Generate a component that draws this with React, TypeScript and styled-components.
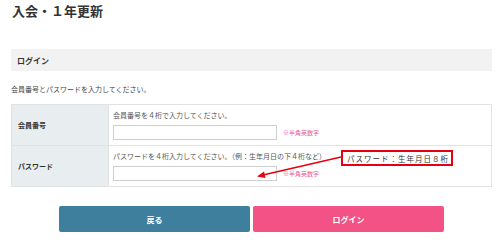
import React, { FC } from 'react';
import styled, { createGlobalStyle } from 'styled-components';

const GlobalStyle = createGlobalStyle`
  body {
    margin: 0;
    background: #fff;
    font-family: "Noto Sans CJK JP", "Noto Sans", sans-serif;
    color: #333;
  }
`;

const Page = styled.div`
  width: 481px;
  padding: 2px 0 0 11px;
`;

const Title = styled.h1`
  margin: 0 0 0 1px;
  font-size: 13px;
  line-height: 18px;
  font-weight: 700;
  color: #333;
`;

const SectionBar = styled.div`
  margin-top: 29px;
  height: 22px;
  display: flex;
  align-items: center;
  padding-left: 6px;
  background: #f2f2f2;
  font-size: 8px;
  font-weight: 700;
`;

const Intro = styled.p`
  margin: 13px 0 0;
  font-size: 7px;
  line-height: 10px;
  color: #444;
`;

const TableWrap = styled.div`
  position: relative;
  margin-top: 10px;
`;

const Table = styled.div`
  display: grid;
  grid-template-columns: 96px 1fr;
  border: 1px solid #e2e2e2;
`;

const Label = styled.div<{ $last?: boolean }>`
  display: flex;
  align-items: center;
  padding-left: 6px;
  background: #e8edef;
  font-size: 7px;
  font-weight: 700;
  border-bottom: ${(p) => (p.$last ? 'none' : '1px solid #e2e2e2')};
`;

const Cell = styled.div<{ $last?: boolean }>`
  padding: 5px 6px 5px 4px;
  border-left: 1px solid #e2e2e2;
  border-bottom: ${(p) => (p.$last ? 'none' : '1px solid #e2e2e2')};
`;

const Hint = styled.div`
  font-size: 7px;
  line-height: 10px;
  color: #555;
`;

const InputRow = styled.div`
  display: flex;
  align-items: center;
  gap: 6px;
  margin-top: 5px;
`;

const Input = styled.input`
  box-sizing: border-box;
  width: 164px;
  height: 15px;
  margin: 0;
  padding: 0 3px;
  border: 1px solid #cfcfcf;
  background: #fff;
`;

const Note = styled.span`
  font-size: 6px;
  color: #ea5b8d;
`;

const Callout = styled.div`
  position: absolute;
  left: 330px;
  top: 46px;
  box-sizing: border-box;
  width: 112px;
  height: 16px;
  border: 2px solid #e60012;
  background: #fff;
  display: flex;
  align-items: center;
  padding-left: 4px;
  font-size: 7.5px;
  letter-spacing: 1px;
  color: #333;
  white-space: nowrap;
`;

const Arrow = styled.svg`
  position: absolute;
  left: 240px;
  top: 48px;
  overflow: visible;
`;

const Buttons = styled.div`
  display: flex;
  justify-content: center;
  gap: 3px;
  margin-top: 19px;
`;

const Button = styled.button<{ $variant: 'back' | 'login' }>`
  width: 191px;
  height: 26px;
  border: none;
  border-radius: 2px;
  background: ${(p) => (p.$variant === 'back' ? '#3e7f9e' : '#f25286')};
  color: #fff;
  font-family: inherit;
  font-size: 8px;
  font-weight: 700;
  padding: 0;
`;

const App: FC = () => (
  <Page>
    <GlobalStyle />
    <Title>入会・１年更新</Title>
    <SectionBar>ログイン</SectionBar>
    <Intro>会員番号とパスワードを入力してください。</Intro>
    <TableWrap>
      <Table>
        <Label>会員番号</Label>
        <Cell>
          <Hint>会員番号を４桁で入力してください。</Hint>
          <InputRow>
            <Input type="text" />
            <Note>※半角英数字</Note>
          </InputRow>
        </Cell>
        <Label $last>パスワード</Label>
        <Cell $last>
          <Hint>パスワードを４桁入力してください。（例：生年月日の下４桁など）</Hint>
          <InputRow>
            <Input type="password" />
            <Note>※半角英数字</Note>
          </InputRow>
        </Cell>
      </Table>
      <Arrow width="92" height="30" viewBox="0 0 92 30">
        <line x1="90" y1="5" x2="12" y2="23" stroke="#e60012" strokeWidth="1.5" />
        <polygon points="6,24.5 13,19.5 14.5,26" fill="#e60012" />
      </Arrow>
      <Callout>パスワード：生年月日８桁</Callout>
    </TableWrap>
    <Buttons>
      <Button $variant="back">戻る</Button>
      <Button $variant="login">ログイン</Button>
    </Buttons>
  </Page>
);

export default App;
